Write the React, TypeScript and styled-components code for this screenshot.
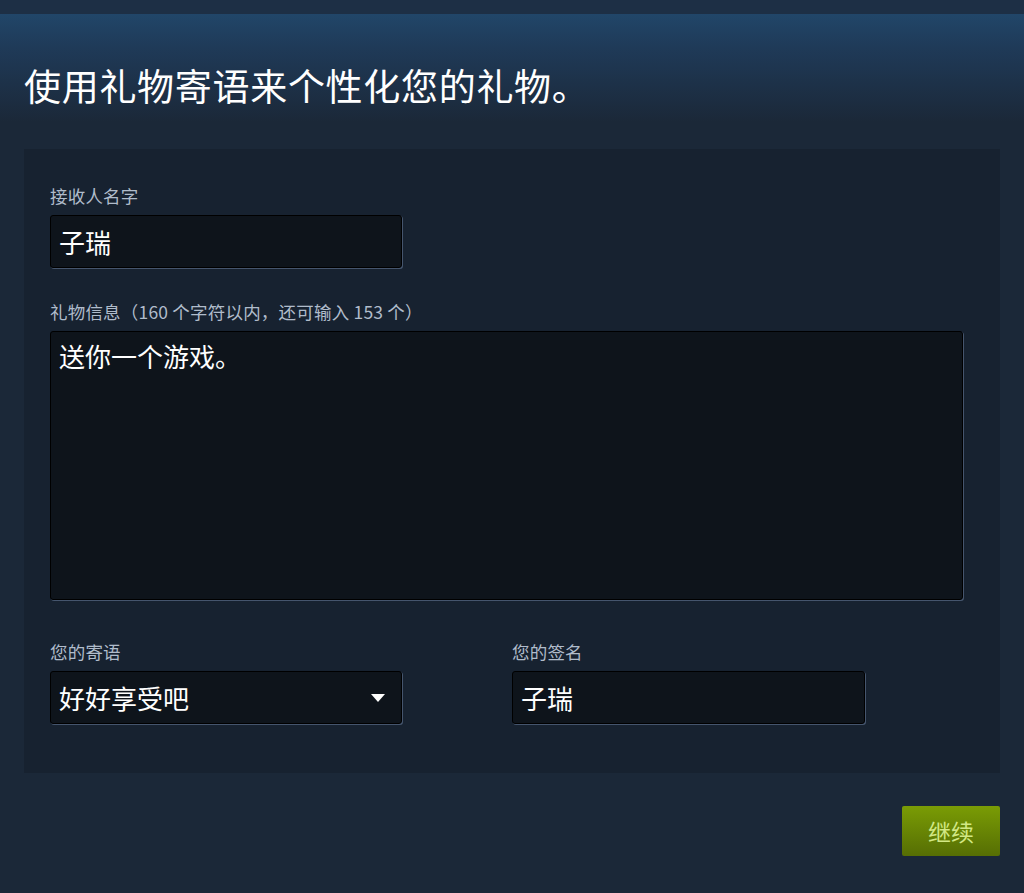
import React from 'react';
import styled, { createGlobalStyle } from 'styled-components';

const GlobalStyle = createGlobalStyle`
  html, body {
    margin: 0;
    padding: 0;
    background: #1b2838;
    font-family: "Noto Sans CJK SC", "Noto Sans", sans-serif;
  }
`;

const Page = styled.div`
  min-height: 893px;
  background: #1b2838;
`;

const TopBar = styled.div`
  height: 14px;
  background: #1d2f45;
  box-shadow: 0 1px 2px rgba(0, 0, 0, 0.35);
`;

const Header = styled.div`
  height: 135px;
  background: linear-gradient(to bottom, #214669 0%, #1f3a58 25%, #1b2838 80%);
  display: flex;
  align-items: flex-start;
  padding: 0 24px;
  box-sizing: border-box;
`;

const Title = styled.h1`
  margin: 49px 0 0;
  font-size: 37px;
  line-height: 44px;
  font-weight: 400;
  letter-spacing: 0.7px;
  color: #ffffff;
`;

const Panel = styled.div`
  margin: 0 24px;
  padding: 36px 26px 49px;
  background: #172230;
  display: flex;
  flex-direction: column;
`;

const Field = styled.div<{ $gap?: number }>`
  display: flex;
  flex-direction: column;
  margin-top: ${(p) => p.$gap ?? 0}px;
`;

const Label = styled.label`
  font-size: 17.5px;
  line-height: 21px;
  letter-spacing: 0.2px;
  color: #b0bccb;
  margin-bottom: 9px;
`;

const boxStyle = `
  box-sizing: border-box;
  background: #0e141b;
  border: 1px solid #000;
  border-radius: 3px;
  box-shadow: 1px 1px 0 0 #45556d;
  color: #ffffff;
  font-family: "Noto Sans CJK SC", "Noto Sans", sans-serif;
  font-size: 26px;
  outline: none;
`;

const TextBox = styled.input<{ $width: number }>`
  ${boxStyle}
  width: ${(p) => p.$width}px;
  height: 53px;
  padding: 0 8px;
`;

const MessageBox = styled.textarea`
  ${boxStyle}
  width: 913px;
  height: 269px;
  padding: 7px 8px;
  line-height: 34px;
  resize: none;
`;

const Row = styled.div`
  display: grid;
  grid-template-columns: 462px 1fr;
  margin-top: 41px;
`;

const Select = styled.div`
  ${boxStyle}
  width: 352px;
  height: 53px;
  padding: 0 16px 0 8px;
  display: flex;
  align-items: center;
  justify-content: space-between;
`;

const Footer = styled.div`
  display: flex;
  justify-content: flex-end;
  padding: 33px 24px 0;
`;

const GreenButton = styled.button`
  width: 98px;
  height: 50px;
  border: none;
  border-radius: 2px;
  background: linear-gradient(to bottom, #7a9c05 0%, #566e04 100%);
  color: #d2e885;
  font-family: "Noto Sans CJK SC", "Noto Sans", sans-serif;
  font-size: 23px;
  cursor: pointer;
`;

function Caret() {
  return (
    <svg width="14" height="8" viewBox="0 0 14 8">
      <polygon points="0,0 14,0 7,8" fill="#ffffff" />
    </svg>
  );
}

export default function App() {
  return (
    <Page>
      <GlobalStyle />
      <TopBar />
      <Header>
        <Title>使用礼物寄语来个性化您的礼物。</Title>
      </Header>
      <Panel>
        <Field>
          <Label>接收人名字</Label>
          <TextBox $width={352} defaultValue="子瑞" />
        </Field>
        <Field $gap={33}>
          <Label>礼物信息（160 个字符以内，还可输入 153 个）</Label>
          <MessageBox defaultValue="送你一个游戏。" />
        </Field>
        <Row>
          <Field>
            <Label>您的寄语</Label>
            <Select>
              <span>好好享受吧</span>
              <Caret />
            </Select>
          </Field>
          <Field>
            <Label>您的签名</Label>
            <TextBox $width={353} defaultValue="子瑞" />
          </Field>
        </Row>
      </Panel>
      <Footer>
        <GreenButton>继续</GreenButton>
      </Footer>
    </Page>
  );
}
